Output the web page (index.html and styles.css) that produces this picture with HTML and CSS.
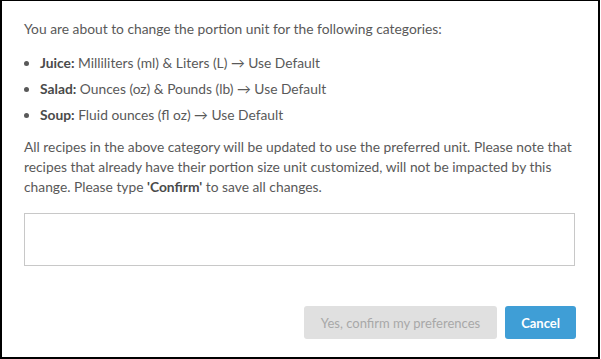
FILE: index.html
```html
<!DOCTYPE html>
<html lang="en">
<head>
    <meta charset="UTF-8">
    <meta name="viewport" content="width=device-width, initial-scale=1.0">
    <title>Change Portion Unit</title>
    <link rel="stylesheet" href="styles.css">
</head>
<body>
    <div class="modal">
        <p class="intro">You are about to change the portion unit for the following categories:</p>
        <ul class="changes">
            <li><b>Juice:</b> Milliliters (ml) &amp; Liters (L) &rarr; Use Default</li>
            <li><b>Salad:</b> Ounces (oz) &amp; Pounds (lb) &rarr; Use Default</li>
            <li><b>Soup:</b> Fluid ounces (fl oz) &rarr; Use Default</li>
        </ul>
        <p class="note">All recipes in the above category will be updated to use the preferred unit. Please note that recipes that already have their portion size unit customized, will not be impacted by this change. Please type <b>'Confirm'</b> to save all changes.</p>
        <input type="text" class="confirm-input">
        <div class="actions">
            <button class="btn btn-disabled" disabled>Yes, confirm my preferences</button>
            <button class="btn btn-primary">Cancel</button>
        </div>
    </div>
</body>
</html>
```

FILE: styles.css
```css
body{
    margin: 0;
    background-color: #fff;
    font-family: Lato, "Open Sans", sans-serif;
    color: #595959;
    font-size: 13.8px;
}
.modal{
    box-sizing: border-box;
    width: 600px;
    height: 359px;
    border: 2px solid #000;
    border-top-width: 1px;
    padding: 18px 22px 0 22px;
    display: flex;
    flex-direction: column;
}
p{
    margin: 0;
    line-height: 20px;
}
b{
    color: #4a4a4a;
}
.changes{
    margin: 14px 0 0 0;
    padding-left: 16px;
}
.changes li{
    line-height: 20px;
    margin-bottom: 6px;
}
.note{
    margin-top: 6px;
}
.confirm-input{
    box-sizing: border-box;
    width: 551px;
    height: 53px;
    margin-top: 16px;
    border: 1px solid #c8c8c8;
    font-family: inherit;
    font-size: 14px;
}
.actions{
    display: flex;
    justify-content: flex-end;
    gap: 8px;
    margin-top: 40px;
}
.btn{
    height: 33px;
    border: none;
    border-radius: 3px;
    font-family: inherit;
    font-size: 13px;
    padding: 0 16px;
}
.btn-disabled{
    background-color: #e0e0e0;
    color: #a8a8a8;
    padding: 0 17px;
}
.btn-primary{
    background-color: #3f9ed6;
    color: #fff;
    font-weight: bold;
}
```
